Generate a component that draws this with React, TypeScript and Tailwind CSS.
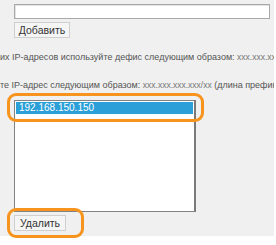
import React from "react";

export default function App() {
  return (
    <div
      className="relative w-[276px] h-[245px] bg-white overflow-hidden"
      style={{ fontFamily: '"Liberation Sans", Arial, sans-serif' }}
    >
      <div className="relative w-[274px] h-[236px] bg-[#f0f0f0] pt-[4px] overflow-hidden">
        <div className="ml-[14px] w-[256px] h-[15px] bg-white border border-[#a9a9a9] shadow-[inset_1px_1px_0_#e3e3e3]" />
        <button className="ml-[14px] mt-[3px] h-[16px] w-[56px] bg-[#f5f5f5] border border-[#cfcfcf] text-[10.5px] leading-[14px] text-[#333] flex items-center justify-center">
          Добавить
        </button>
        <div className="mt-[13px] h-[12px] text-[9px] leading-[12px] text-[#555] whitespace-nowrap overflow-hidden">
          их IP-адресов используйте дефис следующим образом:{" "}
          <span className="text-[8.5px] text-[#777]">xxx.xxx.xxx-xxx.xxx.xxx.xxx</span>
        </div>
        <div className="mt-[16px] h-[12px] text-[9px] leading-[12px] text-[#555] whitespace-nowrap overflow-hidden">
          те IP-адрес следующим образом:{" "}
          <span className="text-[8.5px] text-[#777]">xxx.xxx.xxx.xxx/xx</span> (длина префикса)
        </div>
        <div className="ml-[14px] mt-[9px] w-[182px] h-[112px] bg-white border border-[#828282] border-r-2 border-r-[#7a7a7a] pt-[1px] px-[1px]">
          <div className="h-[12px] bg-[#2a9fd8] text-white text-[10px] leading-[12px] pl-[3px]">
            192.168.150.150
          </div>
        </div>
        <button className="ml-[14px] mt-[3px] h-[16px] w-[52px] bg-[#f5f5f5] border border-[#cfcfcf] text-[10.5px] leading-[14px] text-[#333] flex items-center justify-center">
          Удалить
        </button>
      </div>
      <div className="absolute left-[7px] top-[93px] w-[197px] h-[29px] rounded-[9px] border-[3px] border-[#f7941d]" />
      <div className="absolute left-[7px] top-[208px] w-[77px] h-[30px] rounded-[9px] border-[3px] border-[#f7941d]" />
    </div>
  );
}
